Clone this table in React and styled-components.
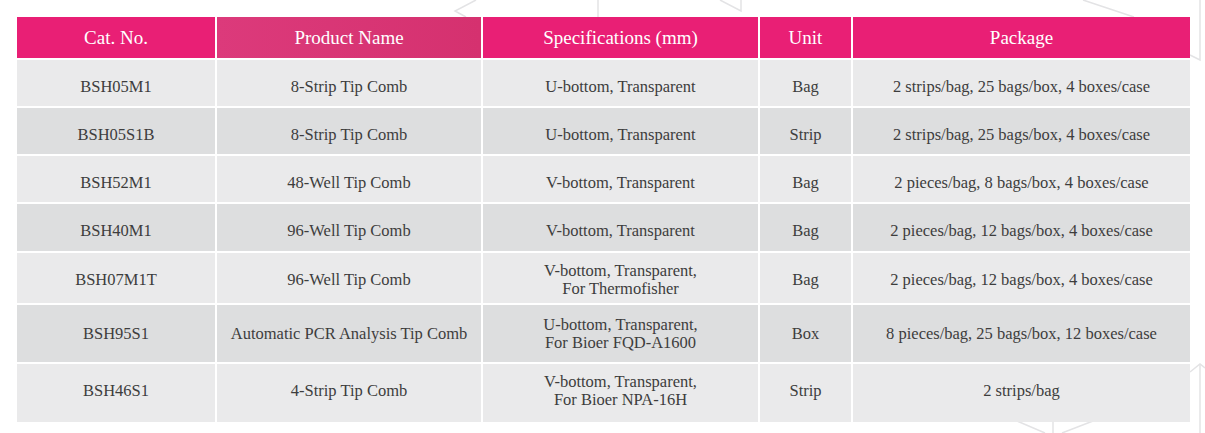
import styled, { createGlobalStyle } from 'styled-components'

const GlobalStyle = createGlobalStyle`
  html, body {
    margin: 0;
    padding: 0;
    background: #ffffff;
  }
  body {
    font-family: "Liberation Serif", "Times New Roman", serif;
  }
`

const columns = [
  { key: 'cat', label: 'Cat. No.', width: 198 },
  { key: 'name', label: 'Product Name', width: 264, muted: true },
  { key: 'spec', label: 'Specifications (mm)', width: 275 },
  { key: 'unit', label: 'Unit', width: 91 },
  { key: 'pack', label: 'Package', width: 337 },
]

// h = row height, shift = how far the text sits below the middle
const rows = [
  { cat: 'BSH05M1', name: '8-Strip Tip Comb', spec: ['U-bottom, Transparent'], unit: 'Bag', pack: '2 strips/bag, 25 bags/box, 4 boxes/case', h: 46, shift: 4 },
  { cat: 'BSH05S1B', name: '8-Strip Tip Comb', spec: ['U-bottom, Transparent'], unit: 'Strip', pack: '2 strips/bag, 25 bags/box, 4 boxes/case', h: 46, shift: 4 },
  { cat: 'BSH52M1', name: '48-Well Tip Comb', spec: ['V-bottom, Transparent'], unit: 'Bag', pack: '2 pieces/bag, 8 bags/box, 4 boxes/case', h: 46, shift: 4 },
  { cat: 'BSH40M1', name: '96-Well Tip Comb', spec: ['V-bottom, Transparent'], unit: 'Bag', pack: '2 pieces/bag, 12 bags/box, 4 boxes/case', h: 47, shift: 3 },
  { cat: 'BSH07M1T', name: '96-Well Tip Comb', spec: ['V-bottom, Transparent,', 'For Thermofisher'], unit: 'Bag', pack: '2 pieces/bag, 12 bags/box, 4 boxes/case', h: 50, shift: 2 },
  { cat: 'BSH95S1', name: 'Automatic PCR Analysis Tip Comb', spec: ['U-bottom, Transparent,', 'For Bioer FQD-A1600'], unit: 'Box', pack: '8 pieces/bag, 25 bags/box, 12 boxes/case', h: 57, shift: 0 },
  { cat: 'BSH46S1', name: '4-Strip Tip Comb', spec: ['V-bottom, Transparent,', 'For Bioer NPA-16H'], unit: 'Strip', pack: '2 strips/bag', h: 58, shift: -2 },
]

const Page = styled.div`
  position: relative;
  width: 1205px;
  height: 433px;
  overflow: hidden;
  background: #ffffff;
`

const Backdrop = styled.svg`
  position: absolute;
  inset: 0;
  width: 1205px;
  height: 433px;
  z-index: 0;
`

const Wrap = styled.div`
  position: relative;
  z-index: 1;
  padding: 17px 0 0 17px;
`

const Grid = styled.div`
  display: grid;
  grid-template-columns: ${columns.map((c) => `${c.width}px`).join(' ')};
  column-gap: 2px;
  row-gap: 2px;
  width: 1173px;
`

const HeadCell = styled.div`
  height: 41px;
  display: flex;
  align-items: center;
  justify-content: center;
  color: #ffffff;
  font-size: 19px;
  background: ${(p) => (p.$muted ? 'linear-gradient(90deg, #dc3a7b, #d5316f)' : '#e91f75')};
`

const Cell = styled.div`
  box-sizing: border-box;
  height: ${(p) => p.$h}px;
  padding-top: ${(p) => Math.max(p.$shift, 0) * 2}px;
  padding-bottom: ${(p) => Math.max(-p.$shift, 0) * 2}px;
  display: flex;
  flex-direction: column;
  align-items: center;
  justify-content: center;
  text-align: center;
  color: #3d3d3d;
  font-size: 16.5px;
  line-height: 18px;
  background: ${(p) => (p.$dark ? 'rgba(219, 220, 221, 0.94)' : 'rgba(233, 233, 234, 0.94)')};
`

const Line = styled.span`
  display: block;
  white-space: nowrap;
`

const lines = [
  'M476 0 L455 11 L466 17',
  'M598 0 L598 17',
  'M720 0 L741 11 L741 0',
  'M1083 0 L1134 17',
  'M1200 0 L1200 60 L1190 55',
  'M1190 372 L1200 364 L1205 368',
  'M1200 364 L1200 433',
  'M1017 421 L1045 433',
  'M1053 421 L1053 433',
  'M1062 433 L1093 421',
]

const App = () => {
  return (
    <>
      <GlobalStyle />
      <Page>
        <Backdrop viewBox="0 0 1205 433">
          {lines.map((d) => (
            <path key={d} d={d} fill="none" stroke="#e3e3e5" strokeWidth="1.5" />
          ))}
        </Backdrop>
        <Wrap>
          <Grid>
            {columns.map((c) => (
              <HeadCell key={c.key} $muted={c.muted}>
                {c.label}
              </HeadCell>
            ))}
            {rows.map((r, i) =>
              columns.map((c) => (
                <Cell key={r.cat + c.key} $h={r.h} $shift={r.shift} $dark={i % 2 === 1}>
                  {Array.isArray(r[c.key])
                    ? r[c.key].map((t) => <Line key={t}>{t}</Line>)
                    : <Line>{r[c.key]}</Line>}
                </Cell>
              ))
            )}
          </Grid>
        </Wrap>
      </Page>
    </>
  )
}

export default App
